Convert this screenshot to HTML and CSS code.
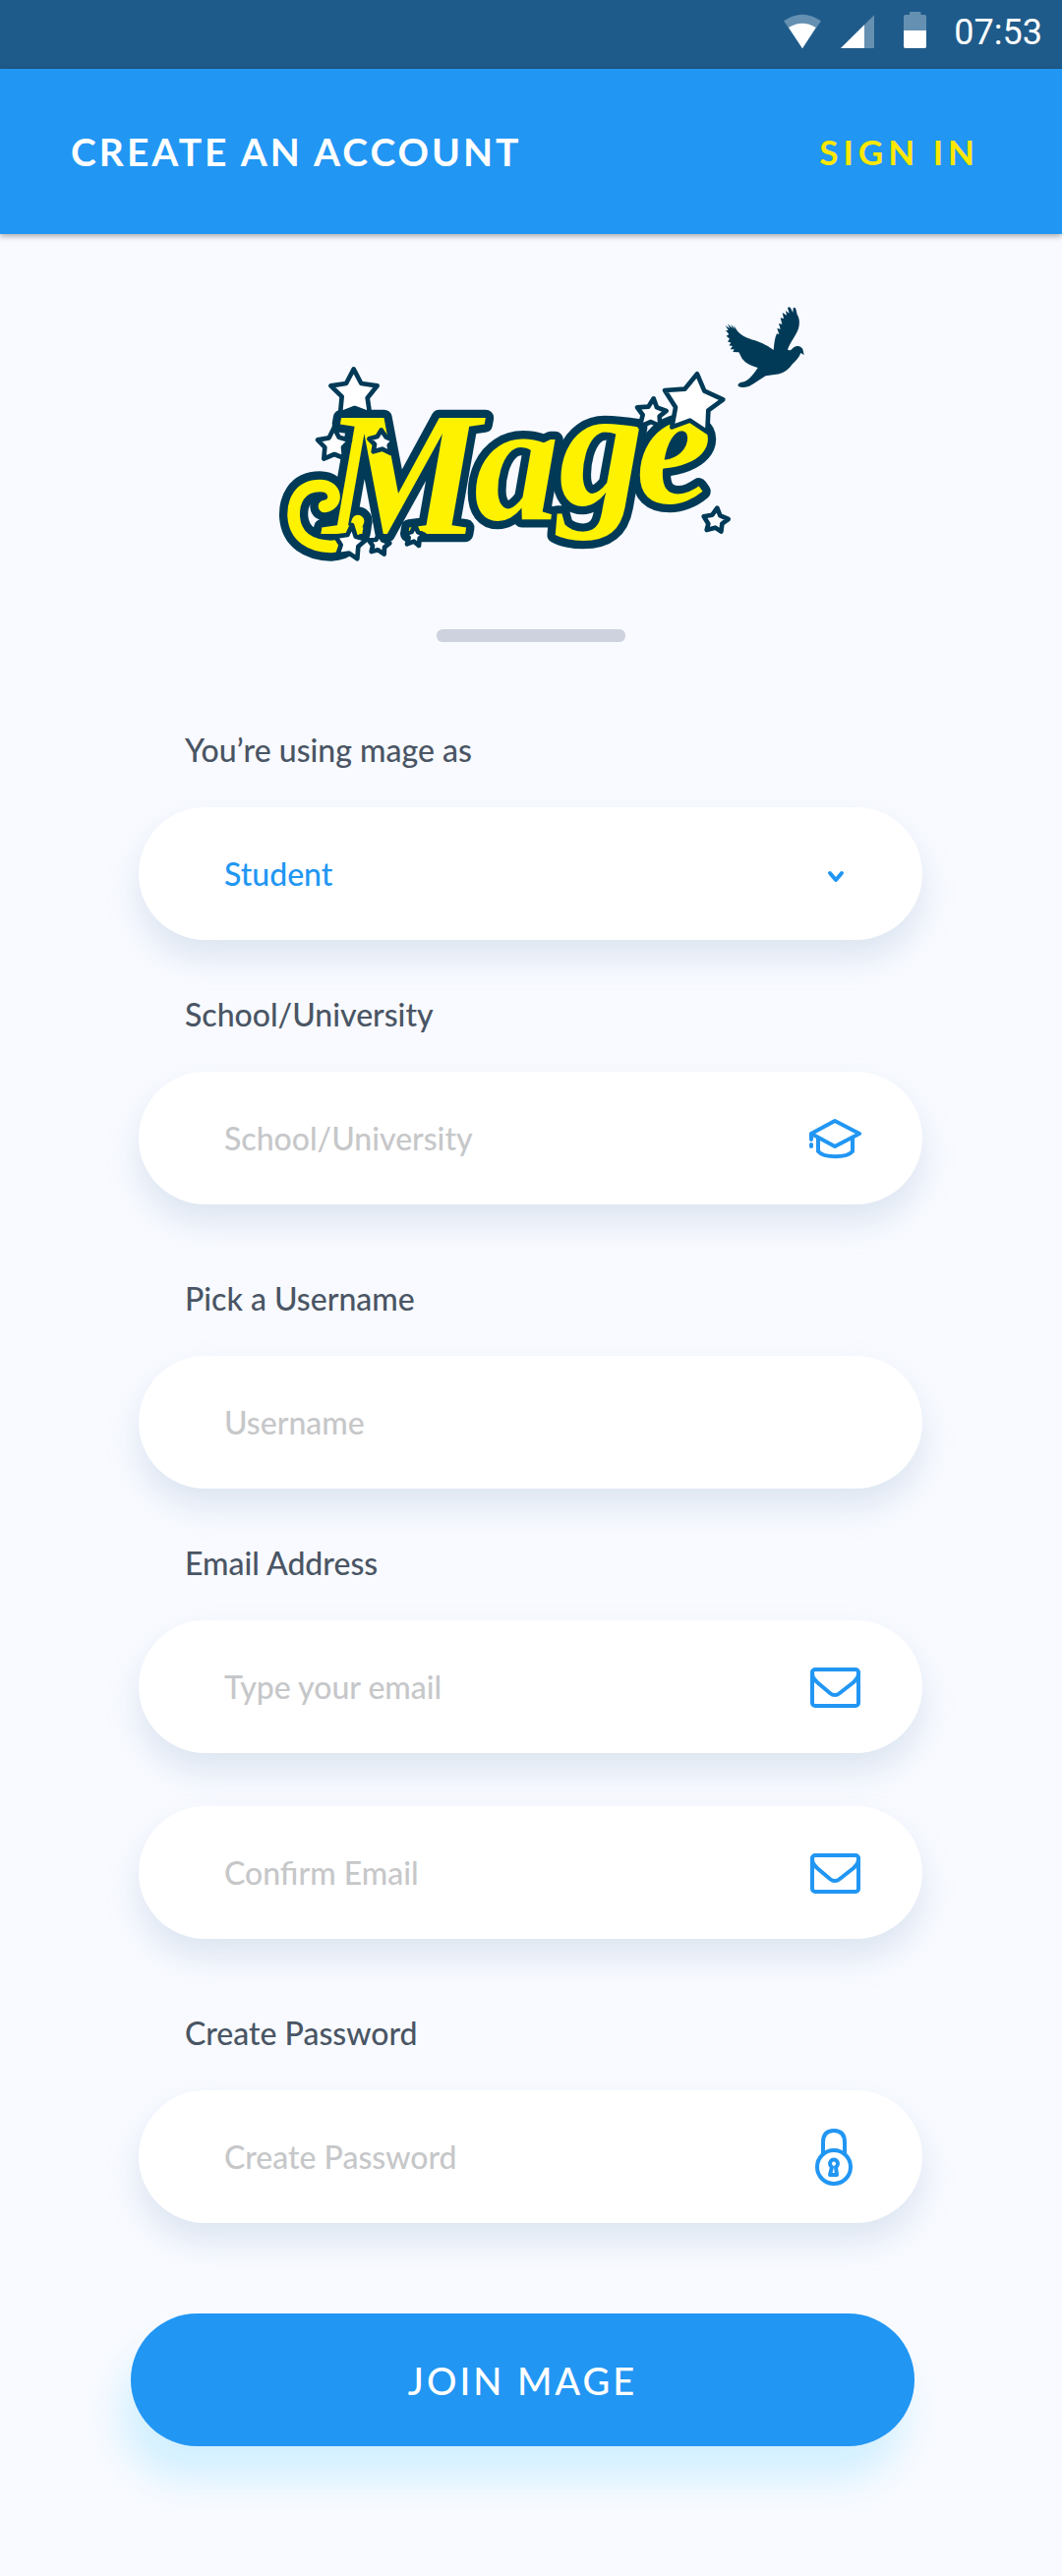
FILE: index.html
```html
<!DOCTYPE html>
<html lang="en">
<head>
<meta charset="utf-8">
<meta name="viewport" content="width=device-width, initial-scale=1">
<title>Create an account</title>
<link rel="stylesheet" href="styles.css">
</head>
<body>
<div class="status">
  <svg class="status-icons" viewBox="0 0 435 114" aria-hidden="true">
    <path class="dim" d="M0 28Q57-11 114 28L57 112Z"/>
    <path d="M15 48Q57 22 98 48L57 112Z"/>
    <path class="dim" d="M276 10V111H174Z"/>
    <path d="M246 40V111H174Z"/>
    <path class="dim" d="M384 0H418V9H430Q435 9 435 14V60H366V14Q366 9 371 9H384Z"/>
    <path d="M366 57H435V106Q435 111 430 111H371Q366 111 366 106Z"/>
  </svg>
  <time class="clock">07:53</time>
</div>
<header class="bar">
  <h1 class="bar-title">CREATE AN ACCOUNT</h1>
  <a class="bar-link" href="#signin">SIGN IN</a>
</header>
<main class="main">
  <svg class="logo" viewBox="-30 0 1680 840" role="img" aria-label="Mage">
    <defs>
      <g id="word">
        <text class="word-text"><tspan class="word-cap" x="176" y="728">M</tspan><tspan x="636" y="684">a</tspan><tspan x="894" y="640">g</tspan><tspan x="1130" y="632">e</tspan></text>
      </g>
      <path id="curl" d="M180 645C222 640 218 582 166 582C104 582 84 630 86 676C90 738 138 766 200 768C250 766 270 730 282 690"/>
    </defs>
    <use href="#curl" class="curl-outline"/>
    <use href="#word" class="word-outline"/>
    <use href="#curl" class="curl-fill"/>
    <use href="#word" class="word-fill"/>
    <g class="stars" transform="translate(0 180)">
      <path d="M269 46L292 90L341 97L311 134L318 182L272 165L228 182L233 130L199 97L246 90Z"/>
      <path d="M209 225L224 254L258 264L237 285L240 318L210 306L178 320L181 285L159 262L194 256Z"/>
      <path d="M353 232L368 254L392 264L377 279L382 303L356 290L329 298L333 276L316 259L341 252Z"/>
      <path d="M264 522L275 557L308 566L283 587L280 625L255 608L220 613L230 583L214 557L250 552Z"/>
      <path d="M347 549L357 568L379 577L363 590L362 611L343 598L323 603L327 585L315 568L337 567Z"/>
      <path d="M456 522L465 543L485 552L470 562L468 585L453 572L432 580L437 560L425 548L446 543Z"/>
    </g>
    <g class="stars" transform="translate(780 0)">
      <path d="M404 316L414 343L443 354L422 370L424 400L396 387L362 402L371 366L354 343L388 341Z"/>
      <path d="M537 241L559 293L616 319L571 352L568 418L515 383L460 403L471 343L438 291L499 287Z"/>
      <path d="M598 650L607 673L632 684L613 698L610 722L592 710L566 717L571 698L557 676L583 671Z"/>
    </g>
    <path class="bird" transform="translate(780 0)" d="M662 278C660 270 668 267 680 265C700 255 712 238 722 222C700 216 684 207 674 194L664 175L646 174L650 166L638 166L645 156L634 154L640 146L630 142L636 134L626 125L634 120L624 108L632 108L623 93L636 102L630 88L644 102L640 90L652 104L648 92L661 112C672 125 690 132 708 137C735 145 758 158 770 168C772 148 774 130 780 118L787 120L781 102L791 104L786 87L796 89L791 70L801 72L797 54L810 62L807 48L818 56L813 40Q817 34 822 40L829 54L830 40Q836 35 838 43L842 60C850 72 850 88 846 102C840 122 822 142 813 166C816 172 824 168 830 161C838 154 852 153 859 165L863 183L853 177C848 192 836 202 826 212C814 230 796 240 778 242L746 247C728 258 710 272 694 279Q674 286 662 278Z"/>
  </svg>
  <hr class="divider">
  <form class="form">
    <div class="group">
      <div class="field">
        <label class="label" for="role">You’re using mage as</label>
        <div class="control">
          <select class="input role" id="role"><option>Student</option><option>Teacher</option></select>
          <svg class="icon chevron" viewBox="0 0 54 60" aria-hidden="true"><path d="M22 29L28 36L34 29"/></svg>
        </div>
      </div>
      <div class="field">
        <label class="label" for="school">School/University</label>
        <div class="control">
          <input class="input" id="school" type="text" placeholder="School/University">
          <svg class="icon" viewBox="0 0 54 60" aria-hidden="true"><path d="M3 25L27 12L52 25L27 38ZM10 30V43C16 50 39 50 45 43V30M3 25V31M3 36V38"/></svg>
        </div>
      </div>
    </div>
    <div class="group">
      <div class="field">
        <label class="label" for="username">Pick a Username</label>
        <div class="control">
          <input class="input" id="username" type="text" placeholder="Username">
        </div>
      </div>
      <div class="field">
        <label class="label" for="email">Email Address</label>
        <div class="control">
          <input class="input" id="email" type="email" placeholder="Type your email">
          <svg class="icon" viewBox="0 0 54 60" aria-hidden="true"><rect x="4" y="12" width="47" height="37" rx="3"/><path d="M4 15C4 20 6 22 9 25L22 36Q27 40 32 36L46 25C49 22 51 20 51 15"/></svg>
        </div>
      </div>
      <div class="field">
        <div class="control">
          <input class="input" type="email" placeholder="Confirm Email" aria-label="Confirm Email">
          <svg class="icon" viewBox="0 0 54 60" aria-hidden="true"><rect x="4" y="12" width="47" height="37" rx="3"/><path d="M4 15C4 20 6 22 9 25L22 36Q27 40 32 36L46 25C49 22 51 20 51 15"/></svg>
        </div>
      </div>
    </div>
    <div class="group">
      <div class="field">
        <label class="label" for="password">Create Password</label>
        <div class="control">
          <input class="input" id="password" type="password" placeholder="Create Password">
          <svg class="icon" viewBox="0 0 54 60" aria-hidden="true"><circle cx="26" cy="40" r="17"/><path d="M15 26V15Q15 3 26 3Q37 3 37 15V26"/><path d="M24 40A4 4 0 1 1 28 40L29 48H22Z"/></svg>
        </div>
      </div>
    </div>
    <button class="join" type="submit">JOIN MAGE</button>
  </form>
</main>
</body>
</html>
```

FILE: styles.css
```css
* {
  box-sizing: border-box;
}

body {
  margin: 0;
  background: #f8faff;
  color: #4a5564;
  font-family: Lato, "Liberation Sans", sans-serif;
  font-size: 32px;
  font-weight: 500;
}

.status {
  display: flex;
  align-items: center;
  justify-content: flex-end;
  gap: 28px;
  height: 70px;
  padding: 0 20px 4px 0;
  background: #1f5b8a;
  color: #fff;
}

.status-icons {
  width: 145px;
  height: 38px;
  margin-bottom: 4px;
  fill: #fff;
}

.status-icons .dim {
  fill: #6590b1;
}

.clock {
  font: 36px/44px Roboto, sans-serif;
}

.bar {
  display: flex;
  align-items: center;
  justify-content: space-between;
  height: 168px;
  padding: 0 84px 0 72px;
  background: #2196f3;
  box-shadow: 0 2px 6px rgba(0, 0, 0, 0.35);
}

.bar-title {
  margin: 0;
  color: #fff;
  font-size: 39px;
  font-weight: 700;
  letter-spacing: 3px;
}

.bar-link {
  color: #ffe800;
  font-size: 35px;
  font-weight: 700;
  letter-spacing: 5px;
  text-decoration: none;
}

.main {
  padding: 62px 0 134px;
}

.logo {
  display: block;
  width: 560px;
  max-width: 100%;
  height: auto;
  margin: 0 auto;
}

.word-text {
  font-family: "Liberation Serif", serif;
  font-size: 520px;
  font-style: italic;
  font-weight: 700;
}

.word-cap {
  font-size: 540px;
}

.word-outline {
  fill: #003a57;
  stroke: #003a57;
  stroke-width: 50px;
  stroke-linejoin: round;
}

.word-fill {
  fill: #fff200;
}

.curl-outline,
.curl-fill {
  fill: none;
  stroke: #003a57;
  stroke-width: 88px;
  stroke-linecap: round;
}

.curl-fill {
  stroke: #fff200;
  stroke-width: 38px;
}

.stars {
  fill: #fff;
  stroke: #003a57;
  stroke-width: 14px;
  stroke-linejoin: round;
}

.bird {
  fill: #003a57;
}

.divider {
  width: 192px;
  height: 13px;
  margin: 60px auto 88px;
  border: 0;
  border-radius: 6px;
  background: #cdd2de;
}

.form {
  display: flex;
  flex-direction: column;
  gap: 74px;
  padding: 0 142px 0 133px;
}

.group {
  display: flex;
  flex-direction: column;
  gap: 54px;
  margin-left: 8px;
}

.label {
  display: block;
  margin: 0 0 36px 47px;
  line-height: 44px;
}

.control {
  display: flex;
  align-items: center;
  height: 135px;
  padding: 0 62px 0 87px;
  border-radius: 68px;
  background: #fff;
  box-shadow: 0 18px 32px rgba(150, 175, 205, 0.28);
}

.input {
  flex: 1;
  min-width: 0;
  height: 100%;
  padding: 0;
  border: 0;
  outline: 0;
  appearance: none;
  background: transparent;
  color: #2196f3;
  font: inherit;
}

.input::placeholder {
  color: #c6c7c9;
  opacity: 1;
}

.icon {
  flex: none;
  width: 54px;
  height: 60px;
  fill: none;
  stroke: #2196f3;
  stroke-width: 4px;
  stroke-linecap: round;
  stroke-linejoin: round;
}

.chevron {
  pointer-events: none;
}

.join {
  height: 135px;
  margin: 18px 8px 0 0;
  border: 0;
  border-radius: 68px;
  background: #2196f3;
  box-shadow: -10px 34px 36px #d3f0ff;
  color: #fff;
  font: inherit;
  font-size: 38px;
  letter-spacing: 3px;
}
```
